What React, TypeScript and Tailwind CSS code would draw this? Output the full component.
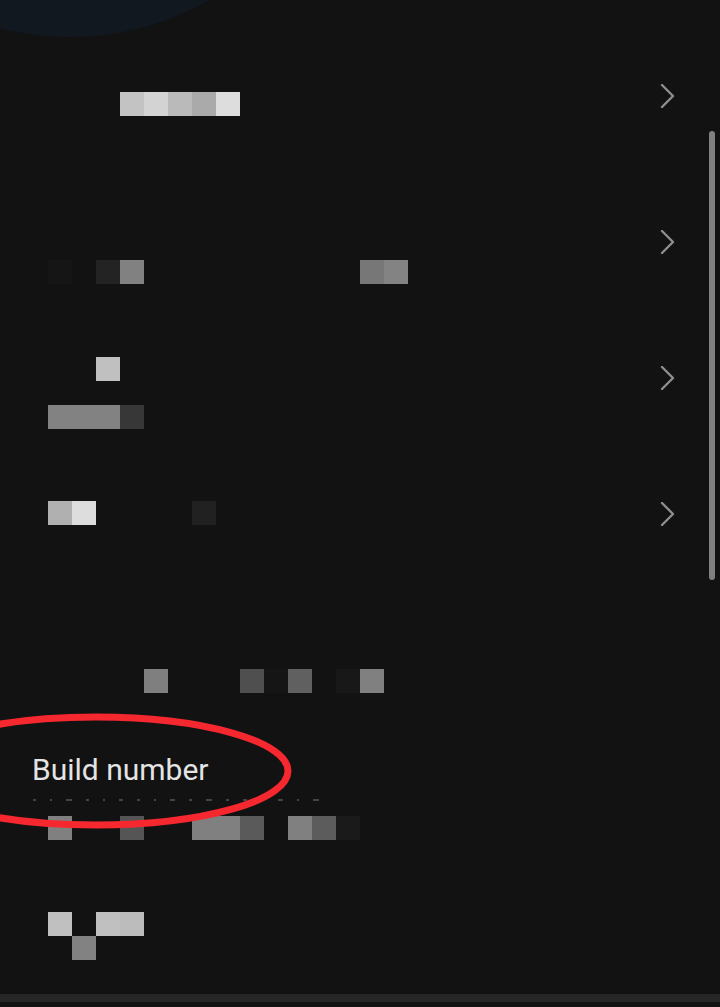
import React from 'react';

// one pixelated (censored) line: 24px cells from x = 0, '' = empty
type Cells = string[];

const PixelRow = ({ cells }: { cells: Cells }) => (
  <div className="flex h-[24px]">
    {cells.map((c, i) => (
      <div key={i} className="w-[24px] h-[24px] shrink-0" style={{ backgroundColor: c || 'transparent' }} />
    ))}
  </div>
);

const Chevron = () => (
  <svg width="24" height="24" viewBox="0 0 24 24" className="shrink-0">
    <polyline points="7,1 18,12 7,23" fill="none" stroke="#8e8e8e" strokeWidth="2.4" strokeLinecap="round" strokeLinejoin="round" />
  </svg>
);

const row1: Cells = ['', '', '', '', '', '#c3c3c3', '#d3d3d3', '#bababa', '#aaaaaa', '#dddddd'];
const row2: Cells = ['', '', '#151515', '', '#232323', '#818181', '', '', '', '', '', '', '', '', '', '#777777', '#838383'];
const row3a: Cells = ['', '', '', '', '#c0c0c0'];
const row3b: Cells = ['', '', '#828282', '#828282', '#828282', '#373737'];
const row4: Cells = ['', '', '#b0b0b0', '#dddddd', '', '', '', '', '#212121'];
const row5: Cells = ['', '', '', '', '', '', '#7f7f7f', '', '', '', '#4f4f4f', '#151515', '#606060', '', '#181818', '#808080'];
const row6: Cells = ['', '', '#808080', '', '', '#555555', '', '', '#808080', '#808080', '#5a5a5a', '', '#808080', '#5c5c5c', '#1a1a1a'];
const row7a: Cells = ['', '', '#c0c0c0', '', '#c0c0c0', '#bcbcbc'];
const row7b: Cells = ['', '', '', '#828282'];

const App = () => {
  return (
    <div className="relative w-[720px] h-[1007px] overflow-hidden bg-[#121212] font-['Roboto',sans-serif]">
      {/* dark header circle, mostly scrolled off */}
      <div className="absolute left-[-213px] top-[-529px] w-[566px] h-[566px] rounded-full bg-[#111820]" />

      <div className="relative flex flex-col pr-[41px]">
        <div className="flex justify-between h-[160px]">
          <div className="mt-[92px]"><PixelRow cells={row1} /></div>
          <div className="mt-[84px]"><Chevron /></div>
        </div>
        <div className="flex justify-between h-[140px]">
          <div className="mt-[100px]"><PixelRow cells={row2} /></div>
          <div className="mt-[70px]"><Chevron /></div>
        </div>
        <div className="flex justify-between h-[150px]">
          <div className="mt-[57px] flex flex-col gap-[24px]">
            <PixelRow cells={row3a} />
            <PixelRow cells={row3b} />
          </div>
          <div className="mt-[66px]"><Chevron /></div>
        </div>
        <div className="flex justify-between h-[150px]">
          <div className="mt-[51px]"><PixelRow cells={row4} /></div>
          <div className="mt-[52px]"><Chevron /></div>
        </div>
        <div className="h-[150px]">
          <div className="mt-[69px]"><PixelRow cells={row5} /></div>
        </div>

        {/* Build number, partly revealed */}
        <div className="h-[66px]">
          <p className="ml-[32px] mt-[3px] text-[30px] leading-[33px] text-[#e4e4e4]">Build number</p>
          <div className="ml-[33px] mt-[13px] flex gap-[14px] h-[2px]">
            {[3, 2, 6, 3, 2, 4, 3, 2, 5, 3, 6, 3, 4, 3, 5, 2, 6].map((w, i) => (
              <div key={i} className="h-[2px] bg-[#444444]" style={{ width: w }} />
            ))}
          </div>
        </div>
        <PixelRow cells={row6} />
        <div className="mt-[72px]">
          <PixelRow cells={row7a} />
          <PixelRow cells={row7b} />
        </div>
        <div className="mt-[34px] h-[8px] bg-[#262626] -mr-[41px]" />
      </div>

      {/* scrollbar */}
      <div className="absolute right-[5px] top-[131px] w-[6px] h-[449px] rounded-full bg-[#808080]" />

      {/* red annotation ring */}
      <svg className="absolute left-0 top-[700px]" width="320" height="150" viewBox="0 0 320 150">
        <ellipse cx="96" cy="71" rx="192" ry="54" fill="none" stroke="#f5282f" strokeWidth="7" />
      </svg>
    </div>
  );
};

export default App;
